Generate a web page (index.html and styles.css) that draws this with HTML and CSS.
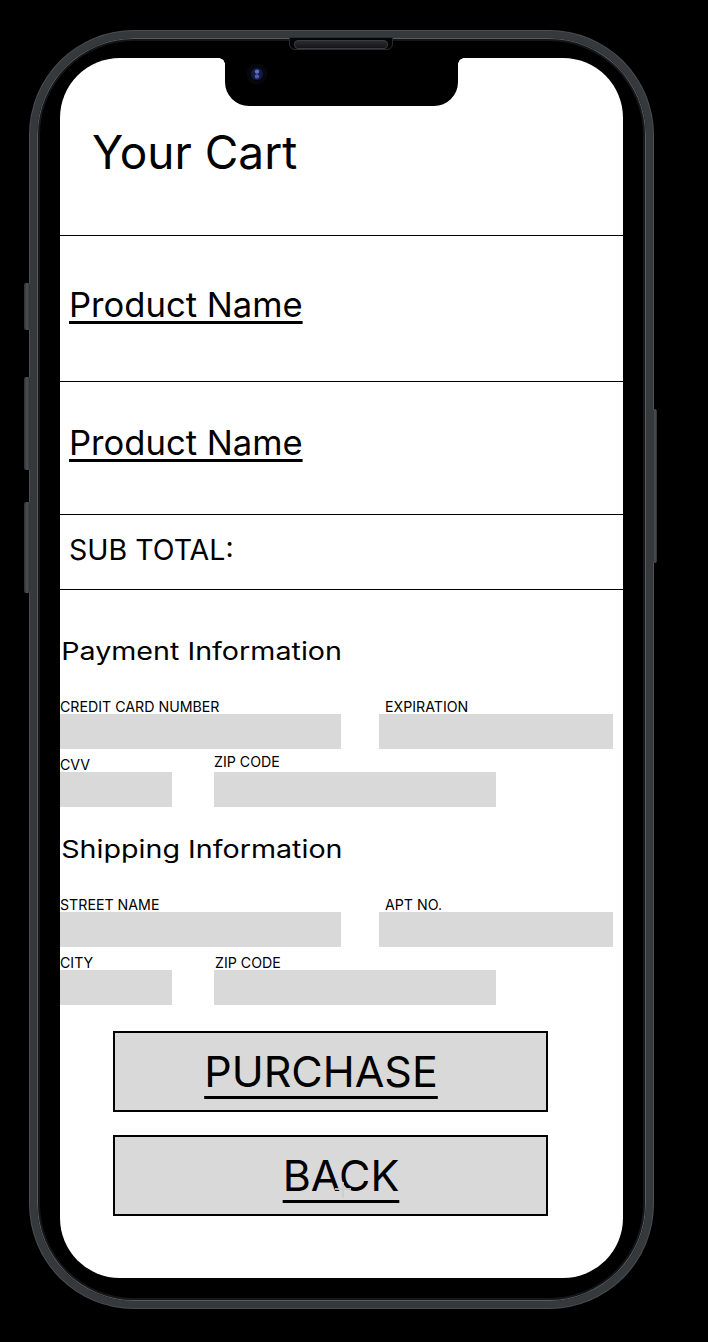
FILE: index.html
```html
<!DOCTYPE html>
<html lang="en">
<head>
<meta charset="utf-8">
<title>Your Cart</title>
<link rel="stylesheet" href="styles.css">
</head>
<body>
<div class="device">
  <span class="side side-mute"></span>
  <span class="side side-vol-up"></span>
  <span class="side side-vol-down"></span>
  <span class="side side-power"></span>
  <span class="speaker"></span>
  <div class="screen">
    <div class="notch">
      <svg class="camera" width="22" height="22" viewBox="0 0 22 22" aria-hidden="true">
        <circle cx="11" cy="11" r="10.5" fill="#06070c"/>
        <circle cx="11" cy="11" r="6" fill="#141a44"/>
        <circle cx="11" cy="8.6" r="2.2" fill="#5f6fc8"/>
        <circle cx="11" cy="13.4" r="2.2" fill="#4c5cb4"/>
      </svg>
    </div>
    <header class="cart-head"><h1 class="cart-title">Your Cart</h1></header>
    <div class="row product product-first"><a class="product-link" href="#">Product Name</a></div>
    <div class="row product product-second"><a class="product-link" href="#">Product Name</a></div>
    <div class="row subtotal">SUB TOTAL:</div>
    <section class="form">
      <h2 class="form-title">Payment Information</h2>
      <div class="fields fields-wide">
        <div class="field"><span class="label">CREDIT CARD NUMBER</span><div class="box"></div></div>
        <div class="field"><span class="label label-inset">EXPIRATION</span><div class="box"></div></div>
      </div>
      <div class="fields fields-narrow">
        <div class="field"><span class="label">CVV</span><div class="box"></div></div>
        <div class="field"><span class="label label-raised">ZIP CODE</span><div class="box"></div></div>
      </div>
      <h2 class="form-title form-title-next">Shipping Information</h2>
      <div class="fields fields-wide">
        <div class="field"><span class="label">STREET NAME</span><div class="box"></div></div>
        <div class="field"><span class="label label-inset">APT NO.</span><div class="box"></div></div>
      </div>
      <div class="fields fields-narrow">
        <div class="field"><span class="label">CITY</span><div class="box"></div></div>
        <div class="field"><span class="label label-shift">ZIP CODE</span><div class="box"></div></div>
      </div>
    </section>
    <div class="actions">
      <button class="btn btn-buy" type="button"><span class="btn-text">PURCHASE</span></button>
      <button class="btn btn-back" type="button"><span class="btn-text">BACK</span><span class="cursor"></span></button>
    </div>
  </div>
</div>
</body>
</html>
```

FILE: styles.css
```css
* { box-sizing: border-box; }

html, body {
  margin: 0;
  padding: 0;
  background: #000;
}

body {
  width: 708px;
  height: 1342px;
  overflow: hidden;
  font-family: Inter, "Noto Sans", "Liberation Sans", sans-serif;
  color: #000;
}

.device {
  position: relative;
  margin: 31px 0 0 30px;
  width: 623px;
  height: 1277px;
  border: 7px solid #35393c;
  border-radius: 104px;
  background: #000;
  padding: 20px 23px 23px 23px;
  box-shadow: 0 0 0 1px #4a4e52, inset 0 0 0 1px #585c61, inset 0 0 0 3px #141618;
}

.side {
  position: absolute;
  background: linear-gradient(90deg, #2c2f32, #4c5156 50%, #2c2f32);
  border-radius: 2px;
}
.side-mute { left: -13px; top: 245px; width: 6px; height: 47px; }
.side-vol-up { left: -13px; top: 339px; width: 6px; height: 93px; }
.side-vol-down { left: -13px; top: 464px; width: 6px; height: 91px; }
.side-power { left: 616px; top: 371px; width: 4px; height: 154px; }

.speaker {
  position: absolute;
  left: 252px;
  top: -1px;
  width: 104px;
  height: 13px;
  border-radius: 0 0 6px 6px;
  background: #050505;
  border: 1px solid #2a2d30;
  z-index: 2;
}
.speaker::after {
  content: "";
  position: absolute;
  left: 4px;
  right: 4px;
  top: 2px;
  height: 7px;
  border-radius: 4px;
  background: linear-gradient(180deg, #2a2c2e, #141516);
  border: 1px solid #3a3d40;
}

.screen {
  position: relative;
  width: 100%;
  height: 100%;
  background: #fff;
  border-radius: 60px;
  overflow: hidden;
}

.notch {
  position: absolute;
  left: 165px;
  top: 0;
  width: 233px;
  height: 48px;
  background: #000;
  border-radius: 0 0 24px 24px;
}
.notch::before,
.notch::after {
  content: "";
  position: absolute;
  top: 0;
  width: 6px;
  height: 6px;
}
.notch::before {
  left: -6px;
  background: radial-gradient(circle at 0 100%, transparent 5.5px, #000 6px);
}
.notch::after {
  right: -6px;
  background: radial-gradient(circle at 100% 100%, transparent 5.5px, #000 6px);
}
.camera {
  position: absolute;
  left: 21px;
  top: 5px;
}

.cart-head {
  height: 178px;
  border-bottom: 1px solid #000;
  padding: 71px 0 0 32px;
}
.cart-title {
  margin: 0;
  font-size: 46px;
  line-height: 46px;
  font-weight: 400;
}

.row {
  border-bottom: 1px solid #000;
  padding-left: 9px;
}
.product { line-height: 34px; }
.product-first { height: 146px; padding-top: 51px; }
.product-second { height: 133px; padding-top: 43px; }
.product-link {
  color: #000;
  font-size: 34.6px;
  line-height: 34px;
  text-decoration: underline;
  text-decoration-thickness: 3px;
  text-underline-offset: 4px;
}

.subtotal {
  height: 75px;
  padding-top: 21px;
  font-size: 28.5px;
  line-height: 28px;
}

.form-title {
  margin: 49px 0 0 0;
  padding-left: 1px;
  font-size: 24.5px;
  line-height: 24px;
  font-weight: 400;
  transform: scaleX(1.17);
  transform-origin: 0 50%;
}
.form-title-next { margin-top: 30px; }

.fields {
  display: grid;
  align-items: end;
  margin-top: 9px;
}
.form-title + .fields { margin-top: 37px; }
.fields-wide { grid-template-columns: 281px 234px; column-gap: 38px; }
.fields-narrow { grid-template-columns: 112px 282px; column-gap: 42px; }

.field {
  display: flex;
  flex-direction: column;
}
.label {
  font-size: 14.2px;
  line-height: 14px;
  white-space: nowrap;
}
.label-inset { padding-left: 6px; }
.label-raised { margin-top: -3px; padding-bottom: 3px; }
.label-shift { padding-left: 1px; }
.box {
  height: 35px;
  background: #d9d9d9;
}

.actions {
  display: flex;
  flex-direction: column;
  gap: 23px;
  margin: 26px 0 0 53px;
}
.btn {
  position: relative;
  width: 435px;
  height: 81px;
  border: 2px solid #000;
  background: #d9d9d9;
  display: flex;
  align-items: center;
  justify-content: center;
  padding: 0;
  font-family: Inter, "Noto Sans", "Liberation Sans", sans-serif;
  color: #000;
}
.btn-buy { padding-right: 19px; }
.btn-back { padding-left: 21px; }
.btn-text {
  font-size: 43px;
  line-height: 43px;
  text-decoration: underline;
  text-decoration-thickness: 3px;
  text-underline-offset: 9px;
}
.cursor {
  position: absolute;
  left: 218px;
  top: 45px;
  width: 20px;
  height: 16px;
}
.cursor::before,
.cursor::after {
  content: "";
  position: absolute;
  background: rgba(205, 205, 205, 0.9);
}
.cursor::before { left: 9px; top: 0; width: 2px; height: 16px; }
.cursor::after { left: 2px; top: 6px; width: 16px; height: 2px; }
```
